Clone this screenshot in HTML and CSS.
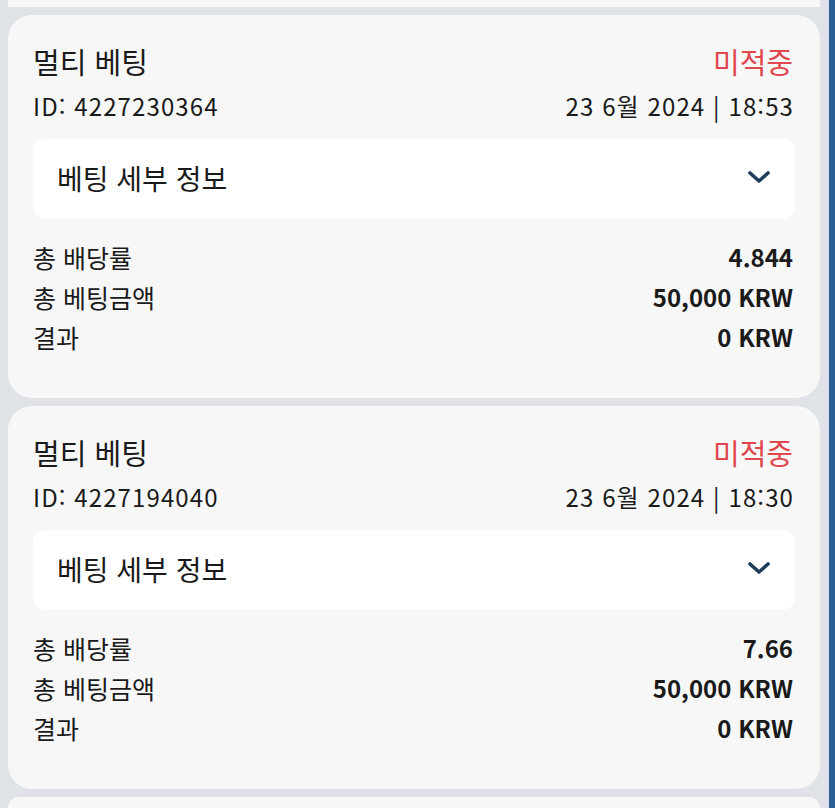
FILE: index.html
```html
<!DOCTYPE html>
<html lang="ko">
<head>
    <meta charset="UTF-8">
    <meta name="viewport" content="width=device-width, initial-scale=1.0">
    <title>베팅 내역</title>
    <link rel="stylesheet" href="styles.css">
</head>
<body>
    <div class="page">
        <div class="list">
            <div class="card-tail"></div>

            <div class="card">
                <div class="row head">
                    <span class="title">멀티 베팅</span>
                    <span class="status">미적중</span>
                </div>
                <div class="row meta">
                    <span>ID: 4227230364</span>
                    <span>23 6월 2024 | 18:53</span>
                </div>
                <div class="details">
                    <span>베팅 세부 정보</span>
                    <svg class="chevron" width="24" height="14" viewBox="0 0 24 14">
                        <path d="M3 3 L12 11 L21 3" fill="none" stroke="#1f3d5c" stroke-width="3.6" stroke-linecap="round" stroke-linejoin="round"/>
                    </svg>
                </div>
                <div class="stats">
                    <div class="row stat"><span>총 배당률</span><b>4.844</b></div>
                    <div class="row stat"><span>총 베팅금액</span><b>50,000 KRW</b></div>
                    <div class="row stat"><span>결과</span><b>0 KRW</b></div>
                </div>
            </div>

            <div class="card">
                <div class="row head">
                    <span class="title">멀티 베팅</span>
                    <span class="status">미적중</span>
                </div>
                <div class="row meta">
                    <span>ID: 4227194040</span>
                    <span>23 6월 2024 | 18:30</span>
                </div>
                <div class="details">
                    <span>베팅 세부 정보</span>
                    <svg class="chevron" width="24" height="14" viewBox="0 0 24 14">
                        <path d="M3 3 L12 11 L21 3" fill="none" stroke="#1f3d5c" stroke-width="3.6" stroke-linecap="round" stroke-linejoin="round"/>
                    </svg>
                </div>
                <div class="stats">
                    <div class="row stat"><span>총 배당률</span><b>7.66</b></div>
                    <div class="row stat"><span>총 베팅금액</span><b>50,000 KRW</b></div>
                    <div class="row stat"><span>결과</span><b>0 KRW</b></div>
                </div>
            </div>

            <div class="card card-next"></div>
        </div>
        <div class="scrollbar"></div>
    </div>
</body>
</html>
```

FILE: styles.css
```css
* {
    margin: 0;
    padding: 0;
    box-sizing: border-box;
}

body {
    font-family: 'Noto Sans CJK KR', 'Noto Sans', sans-serif;
    background: #dfe2e7;
    color: #1a1a1a;
    height: 808px;
    overflow: hidden;
}

.page {
    display: flex;
    height: 808px;
    overflow: hidden;
}

.list {
    flex: 1;
    display: flex;
    flex-direction: column;
    gap: 8px;
    padding: 0 9px 0 8px;
}

.scrollbar {
    width: 6px;
    background: #2a5f96;
}

.card-tail {
    height: 7px;
    background: #f7f7f7;
    flex-shrink: 0;
}

.card {
    background: #f7f7f7;
    border-radius: 24px;
    padding: 28px 25px 41px 25px;
    flex-shrink: 0;
}

.card-next {
    flex: 1;
    flex-shrink: 1;
    min-height: 0;
    padding: 0;
    border-radius: 24px 24px 0 0;
}

.row {
    display: flex;
    justify-content: space-between;
    align-items: center;
    padding-right: 2px;
}

.head {
    font-size: 29px;
    line-height: 36px;
}

.status {
    color: #e0484e;
}

.meta {
    font-size: 24px;
    line-height: 30px;
    letter-spacing: 1.1px;
    margin-top: 12px;
}

.meta span:last-child {
    margin-right: -1px;
}

.details {
    display: flex;
    justify-content: space-between;
    align-items: center;
    height: 80px;
    margin-top: 18px;
    background: #ffffff;
    border-radius: 12px;
    padding: 0 24px 2px 24px;
    font-size: 28px;
}

.chevron {
    display: block;
    margin-top: -2px;
}

.stats {
    margin-top: 18px;
}

.stat {
    font-size: 25px;
    line-height: 40px;
}

.stat b {
    font-size: 24px;
    font-weight: 700;
}
```
